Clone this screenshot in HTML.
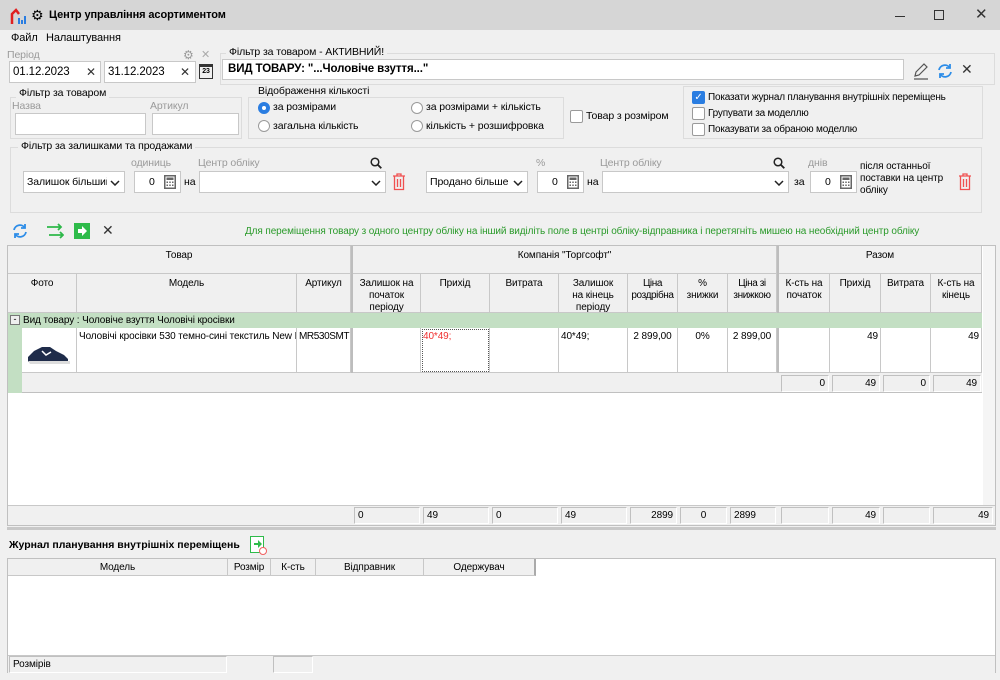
<!DOCTYPE html>
<html><head><meta charset="utf-8">
<style>
*{box-sizing:border-box;margin:0;padding:0}
body{width:1000px;height:680px;background:#f0f0f0;font-family:"Liberation Sans","DejaVu Sans",sans-serif;font-size:10.5px;letter-spacing:-0.1px;color:#000;position:relative;overflow:hidden}
.a{position:absolute}
.inp{position:absolute;background:#fff;border:1px solid #c8c8c8}
.gb{position:absolute;border:1px solid #dcdcdc}
.gl{position:absolute;background:#f0f0f0;padding:0 3px;font-size:10.5px}
.lbl{position:absolute;color:#9a9a9a;font-size:10.5px}
.rad{position:absolute;width:12px;height:12px;border:1px solid #9a9a9a;border-radius:50%;background:#fff}
.chk{position:absolute;width:13px;height:13px;border:1px solid #9a9a9a;border-radius:2px;background:#fff}
.c{position:absolute;border-right:1px solid #c8c8c8;text-align:center;font-size:10px;line-height:12px;padding-top:4px}
.h{background:#f0f0f0;border-bottom:1px solid #c8c8c8}
.d{position:absolute;background:#fff;border-right:1px solid #c8c8c8;border-bottom:1px solid #c8c8c8;font-size:10px;padding:3px 2px}
.t{position:absolute;background:#f0f0f0;border:1px solid #c0c0c0;border-right-color:#fff;border-bottom-color:#fff;font-size:10px;padding:2px 3px;height:17px}
</style></head><body>
<svg width="0" height="0" style="position:absolute"><defs>
<symbol id="calc" viewBox="0 0 12 14"><rect x="0.75" y="0.75" width="10.5" height="12.5" fill="none" stroke="#666" stroke-width="1.5"/><rect x="2.5" y="2.5" width="7" height="2.5" fill="#666"/><rect x="2.5" y="6.5" width="1.5" height="1.5" fill="#666"/><rect x="5.25" y="6.5" width="1.5" height="1.5" fill="#666"/><rect x="8" y="6.5" width="1.5" height="1.5" fill="#666"/><rect x="2.5" y="9.5" width="1.5" height="1.5" fill="#666"/><rect x="5.25" y="9.5" width="1.5" height="1.5" fill="#666"/><rect x="8" y="9.5" width="1.5" height="1.5" fill="#666"/></symbol>
<symbol id="chev" viewBox="0 0 10 6"><path d="M1 1l4 4 4-4" stroke="#222" stroke-width="1.5" fill="none"/></symbol>
<symbol id="mag" viewBox="0 0 12 12"><circle cx="5" cy="5" r="3.8" stroke="#222" stroke-width="1.5" fill="none"/><path d="M7.8 7.8l3.5 3.5" stroke="#222" stroke-width="1.8"/></symbol>
<symbol id="trash" viewBox="0 0 14 18"><path d="M1 3h12M5 3V1h4v2M2.5 3.5v13h9v-13M5.5 6v8M8.5 6v8" stroke="#f05050" stroke-width="1.3" fill="none"/></symbol>
<symbol id="refr" viewBox="0 0 18 18"><path d="M3 8a6 6 0 0 1 11-2M15 10a6 6 0 0 1-11 2" stroke="#2d8de8" stroke-width="1.8" fill="none"/><path d="M14 2v4h-4M4 16v-4h4" stroke="#2d8de8" stroke-width="1.8" fill="none"/></symbol>
</defs></svg>
<div class="a" style="left:0;top:0;width:1000px;height:30px;background:#d6d6d6"></div>
<svg class="a" style="left:10px;top:8px" width="18" height="18"><path d="M2 16V6l4-4 3 4" stroke="#e02020" stroke-width="2.5" fill="none"/><rect x="8" y="10" width="2" height="6" fill="#2a7de1"/><rect x="11" y="12" width="2" height="4" fill="#2a7de1"/><rect x="14" y="8" width="2" height="8" fill="#2a7de1"/></svg>
<div class="a" style="left:31px;top:8px;font-size:14px;line-height:14px">⚙</div>
<div class="a" style="left:49px;top:9px;font-weight:bold;font-size:11px">Центр управління асортиментом</div>
<div class="a" style="left:895px;top:16px;width:10px;height:1px;background:#333"></div>
<div class="a" style="left:934px;top:10px;width:10px;height:10px;border:1px solid #333"></div>
<div class="a" style="left:975px;top:5px;font-size:15px;color:#333">✕</div>
<div class="a" style="left:11px;top:32px;font-size:11px">Файл</div>
<div class="a" style="left:46px;top:32px;font-size:11px">Налаштування</div>
<div class="lbl" style="left:7px;top:49px">Період</div>
<div class="a" style="left:183px;top:48px;color:#999;font-size:12px">⚙</div>
<div class="a" style="left:201px;top:48px;color:#aaa;font-size:11px">✕</div>
<div class="inp" style="left:9px;top:61px;width:92px;height:22px"><span class="a" style="left:3px;top:4px;font-size:11.5px">01.12.2023</span><span class="a" style="left:76px;top:3px;font-size:12px;color:#333">✕</span></div>
<div class="inp" style="left:104px;top:61px;width:92px;height:22px"><span class="a" style="left:3px;top:4px;font-size:11.5px">31.12.2023</span><span class="a" style="left:75px;top:3px;font-size:12px;color:#333">✕</span></div>
<div class="a" style="left:199px;top:64px;width:14px;height:15px;border:1.5px solid #333;border-top-width:3px;font-size:7px;font-weight:bold;text-align:center;line-height:10px">23</div>
<div class="gb" style="left:220px;top:53px;width:775px;height:32px"></div>
<div class="gl" style="left:226px;top:46px">Фільтр за товаром - АКТИВНИЙ!</div>
<div class="inp" style="left:222px;top:59px;width:682px;height:21px"><span class="a" style="left:5px;top:3px;font-weight:bold;font-size:11.5px">ВИД ТОВАРУ: "...Чоловіче взуття..."</span></div>
<svg class="a" style="left:912px;top:62px" width="18" height="18"><path d="M3 14l1-4 8-8 3 3-8 8z M2 17h14" stroke="#555" stroke-width="1.2" fill="none"/></svg>
<svg class="a" style="left:936px;top:62px" width="18" height="18"><use href="#refr"/></svg>
<div class="a" style="left:961px;top:61px;font-size:14px;color:#333">✕</div>
<div class="gb" style="left:10px;top:97px;width:232px;height:42px"></div>
<div class="gl" style="left:16px;top:87px">Фільтр за товаром</div>
<div class="lbl" style="left:12px;top:100px">Назва</div>
<div class="lbl" style="left:150px;top:100px">Артикул</div>
<div class="inp" style="left:15px;top:113px;width:131px;height:22px"></div>
<div class="inp" style="left:152px;top:113px;width:87px;height:22px"></div>
<div class="gb" style="left:248px;top:97px;width:316px;height:42px"></div>
<div class="gl" style="left:255px;top:85px">Відображення кількості</div>
<div class="rad" style="left:258px;top:102px;border:4px solid #2a7de1"></div><div class="a" style="left:273px;top:101px">за розмірами</div>
<div class="rad" style="left:258px;top:120px"></div><div class="a" style="left:273px;top:120px">загальна кількість</div>
<div class="rad" style="left:411px;top:102px"></div><div class="a" style="left:426px;top:101px">за розмірами + кількість</div>
<div class="rad" style="left:411px;top:120px"></div><div class="a" style="left:426px;top:120px">кількість + розшифровка</div>
<div class="chk" style="left:570px;top:110px"></div><div class="a" style="left:586px;top:110px">Товар з розміром</div>
<div class="gb" style="left:683px;top:86px;width:300px;height:53px"></div>
<div class="chk" style="left:692px;top:91px;background:#2a7de1;border-color:#2a7de1;color:#fff;font-size:10px;line-height:11px;text-align:center">✓</div><div class="a" style="left:708px;top:92px;font-size:10px;letter-spacing:-0.2px">Показати журнал планування внутрішніх переміщень</div>
<div class="chk" style="left:692px;top:107px"></div><div class="a" style="left:708px;top:108px;font-size:10px;letter-spacing:-0.2px">Групувати за моделлю</div>
<div class="chk" style="left:692px;top:123px"></div><div class="a" style="left:708px;top:124px;font-size:10px;letter-spacing:-0.2px">Показувати за обраною моделлю</div>
<div class="gb" style="left:10px;top:147px;width:972px;height:66px"></div>
<div class="gl" style="left:18px;top:140px">Фільтр за залишками та продажами</div>
<div class="inp" style="left:23px;top:171px;width:102px;height:22px"><span class="a" style="left:3px;top:4px;white-space:nowrap;overflow:hidden;width:80px">Залишок більший</span><svg class="a" style="left:86px;top:8px" width="10" height="6"><use href="#chev"/></svg></div>
<div class="lbl" style="left:131px;top:157px">одиниць</div>
<div class="inp" style="left:134px;top:171px;width:47px;height:22px"><span class="a" style="left:14px;top:4px">0</span><svg class="a" style="left:29px;top:3px" width="12" height="14"><use href="#calc"/></svg></div>
<div class="a" style="left:184px;top:176px">на</div>
<div class="lbl" style="left:198px;top:157px">Центр обліку</div>
<svg class="a" style="left:370px;top:157px" width="12" height="12"><use href="#mag"/></svg>
<div class="inp" style="left:199px;top:171px;width:187px;height:22px"><svg class="a" style="left:171px;top:8px" width="10" height="6"><use href="#chev"/></svg></div>
<svg class="a" style="left:392px;top:173px" width="14" height="18"><use href="#trash"/></svg>
<div class="inp" style="left:426px;top:171px;width:102px;height:22px"><span class="a" style="left:3px;top:4px">Продано більше</span><svg class="a" style="left:86px;top:8px" width="10" height="6"><use href="#chev"/></svg></div>
<div class="lbl" style="left:536px;top:157px">%</div>
<div class="inp" style="left:537px;top:171px;width:47px;height:22px"><span class="a" style="left:14px;top:4px">0</span><svg class="a" style="left:29px;top:3px" width="12" height="14"><use href="#calc"/></svg></div>
<div class="a" style="left:587px;top:176px">на</div>
<div class="lbl" style="left:600px;top:157px">Центр обліку</div>
<svg class="a" style="left:773px;top:157px" width="12" height="12"><use href="#mag"/></svg>
<div class="inp" style="left:602px;top:171px;width:187px;height:22px"><svg class="a" style="left:171px;top:8px" width="10" height="6"><use href="#chev"/></svg></div>
<div class="a" style="left:794px;top:176px">за</div>
<div class="lbl" style="left:808px;top:157px">днів</div>
<div class="inp" style="left:810px;top:171px;width:47px;height:22px"><span class="a" style="left:14px;top:4px">0</span><svg class="a" style="left:29px;top:3px" width="12" height="14"><use href="#calc"/></svg></div>
<div class="a" style="left:860px;top:161px;line-height:12px;font-size:10px">після останньої<br>поставки на центр<br>обліку</div>
<svg class="a" style="left:958px;top:173px" width="14" height="18"><use href="#trash"/></svg>
<svg class="a" style="left:11px;top:222px" width="18" height="18"><use href="#refr"/></svg>
<svg class="a" style="left:46px;top:223px" width="18" height="16"><path d="M1 4h14M12 1l3 3-3 3M3 12h14M14 9l3 3-3 3" stroke="#2eb84a" stroke-width="1.8" fill="none"/></svg>
<div class="a" style="left:74px;top:223px;width:16px;height:16px;background:#2ebb4a"><svg width="16" height="16"><path d="M4 6h4V3l5 5-5 5v-3H4z" fill="#fff"/></svg></div>
<div class="a" style="left:102px;top:222px;font-size:14px;font-weight:bold;color:#333">✕</div>
<div class="a" style="left:245px;top:226px;color:#2a9a2a;font-size:10px;letter-spacing:-0.1px;white-space:nowrap">Для переміщення товару з одного центру обліку на інший виділіть поле в центрі обліку-відправника і перетягніть мишею на необхідний центр обліку</div>
<div class="a" style="left:7px;top:245px;width:989px;height:281px;background:#fff;border:1px solid #c0c0c0"></div>
<div class="a" style="left:983px;top:246px;width:12px;height:259px;background:#f5f5f5"></div>
<div class="c h" style="left:8px;top:246px;width:343px;height:28px">Товар</div>
<div class="a" style="left:351px;top:246px;width:2px;height:127px;background:#bdbdbd"></div>
<div class="c h" style="left:353px;top:246px;width:424px;height:28px">Компанія "Торгсофт"</div>
<div class="a" style="left:777px;top:246px;width:2px;height:127px;background:#bdbdbd"></div>
<div class="c h" style="left:779px;top:246px;width:203px;height:28px">Разом</div>
<div class="c h" style="left:8px;top:274px;width:69px;height:39px">Фото</div>
<div class="c h" style="left:77px;top:274px;width:220px;height:39px">Модель</div>
<div class="c h" style="left:297px;top:274px;width:54px;height:39px">Артикул</div>
<div class="c h" style="left:353px;top:274px;width:68px;height:39px">Залишок на початок періоду</div>
<div class="c h" style="left:421px;top:274px;width:69px;height:39px">Прихід</div>
<div class="c h" style="left:490px;top:274px;width:69px;height:39px">Витрата</div>
<div class="c h" style="left:559px;top:274px;width:69px;height:39px;padding-left:8px;padding-right:8px">Залишок на кінець періоду</div>
<div class="c h" style="left:628px;top:274px;width:50px;height:39px;letter-spacing:-0.4px">Ціна роздрібна</div>
<div class="c h" style="left:678px;top:274px;width:50px;height:39px;padding-left:8px;padding-right:8px">% знижки</div>
<div class="c h" style="left:728px;top:274px;width:49px;height:39px;letter-spacing:-0.4px">Ціна зі знижкою</div>
<div class="c h" style="left:779px;top:274px;width:51px;height:39px">К-сть на початок</div>
<div class="c h" style="left:830px;top:274px;width:51px;height:39px">Прихід</div>
<div class="c h" style="left:881px;top:274px;width:50px;height:39px">Витрата</div>
<div class="c h" style="left:931px;top:274px;width:51px;height:39px">К-сть на кінець</div>
<div class="a" style="left:8px;top:313px;width:974px;height:15px;background:#c3dfc3"></div>
<div class="a" style="left:8px;top:328px;width:14px;height:65px;background:#c3dfc3"></div>
<div class="a" style="left:10px;top:315px;width:10px;height:10px;border:1px solid #777;background:#eee;font-size:9px;line-height:7px;text-align:center">-</div>
<div class="a" style="left:23px;top:315px;font-size:10px">Вид товару : Чоловіче взуття Чоловічі кросівки</div>
<div class="d" style="left:22px;top:328px;width:55px;height:45px"><svg width="46" height="38"><path d="M4 26l6-6 8-4 8 0 6 4 8 4 4 4v3H4z" fill="#1f2c4a"/><path d="M4 30h42v3H6z" fill="#ddd"/><path d="M18 20l4 4 5-3" stroke="#fff" stroke-width="1.5" fill="none"/></svg></div>
<div class="d" style="left:77px;top:328px;width:220px;height:45px;white-space:nowrap;overflow:hidden">Чоловічі кросівки 530 темно-сині текстиль New Balance</div>
<div class="d" style="left:297px;top:328px;width:54px;height:45px;letter-spacing:-0.4px">MR530SMT</div>
<div class="d" style="left:353px;top:328px;width:68px;height:45px"></div>
<div class="d" style="left:421px;top:328px;width:69px;height:45px;color:#f03030;outline:1px dotted #555;outline-offset:-2px">40*49;</div>
<div class="d" style="left:490px;top:328px;width:69px;height:45px"></div>
<div class="d" style="left:559px;top:328px;width:69px;height:45px">40*49;</div>
<div class="d" style="left:628px;top:328px;width:50px;height:45px;text-align:center">2 899,00</div>
<div class="d" style="left:678px;top:328px;width:50px;height:45px;text-align:center">0%</div>
<div class="d" style="left:728px;top:328px;width:49px;height:45px;text-align:center">2 899,00</div>
<div class="d" style="left:779px;top:328px;width:51px;height:45px"></div>
<div class="d" style="left:830px;top:328px;width:51px;height:45px;text-align:right">49</div>
<div class="d" style="left:881px;top:328px;width:50px;height:45px"></div>
<div class="d" style="left:931px;top:328px;width:51px;height:45px;text-align:right">49</div>
<div class="a" style="left:22px;top:373px;width:960px;height:20px;background:#f0f0f0;border-bottom:1px solid #c0c0c0"></div>
<div class="t" style="left:781px;top:375px;width:48px;text-align:right">0</div>
<div class="t" style="left:832px;top:375px;width:48px;text-align:right">49</div>
<div class="t" style="left:883px;top:375px;width:47px;text-align:right">0</div>
<div class="t" style="left:933px;top:375px;width:48px;text-align:right">49</div>
<div class="a" style="left:8px;top:505px;width:987px;height:20px;background:#f0f0f0;border-top:1px solid #c8c8c8"></div>
<div class="t" style="left:354px;top:507px;width:66px">0</div>
<div class="t" style="left:423px;top:507px;width:66px">49</div>
<div class="t" style="left:492px;top:507px;width:66px">0</div>
<div class="t" style="left:561px;top:507px;width:66px">49</div>
<div class="t" style="left:630px;top:507px;width:47px;text-align:right">2899</div>
<div class="t" style="left:680px;top:507px;width:47px;text-align:center">0</div>
<div class="t" style="left:730px;top:507px;width:46px">2899</div>
<div class="t" style="left:781px;top:507px;width:48px"></div>
<div class="t" style="left:832px;top:507px;width:48px;text-align:right">49</div>
<div class="t" style="left:883px;top:507px;width:47px"></div>
<div class="t" style="left:933px;top:507px;width:60px;text-align:right">49</div>
<div class="a" style="left:7px;top:527px;width:989px;height:3px;background:#c8c8c8"></div>
<div class="a" style="left:9px;top:539px;font-weight:bold;font-size:10.5px;letter-spacing:0">Журнал планування внутрішніх переміщень</div>
<div class="a" style="left:250px;top:536px;width:14px;height:17px;border:1px solid #2ebb4a;background:#fff"><svg width="18" height="20" style="position:absolute;left:-1px;top:-1px"><path d="M4 7h4V4l4 4-4 4V9H4z" fill="#2ebb4a"/><circle cx="13" cy="15" r="3.5" stroke="#f06060" stroke-width="1" fill="#fff"/></svg></div>
<div class="a" style="left:7px;top:558px;width:989px;height:115px;background:#fff;border:1px solid #c0c0c0"></div>
<div class="c h" style="left:8px;top:559px;width:220px;height:17px;padding-top:3px;font-size:10px">Модель</div>
<div class="c h" style="left:228px;top:559px;width:43px;height:17px;padding-top:3px;font-size:10px">Розмір</div>
<div class="c h" style="left:271px;top:559px;width:45px;height:17px;padding-top:3px;font-size:10px">К-сть</div>
<div class="c h" style="left:316px;top:559px;width:108px;height:17px;padding-top:3px;font-size:10px">Відправник</div>
<div class="c h" style="left:424px;top:559px;width:112px;height:17px;padding-top:3px;font-size:10px;border-right:2px solid #aaa">Одержувач</div>
<div class="a" style="left:8px;top:655px;width:987px;height:18px;background:#f0f0f0;border-top:1px solid #c8c8c8"></div>
<div class="t" style="left:9px;top:656px;width:218px;font-size:10px">Розмірів</div>
<div class="t" style="left:273px;top:656px;width:40px"></div>
</body></html>
